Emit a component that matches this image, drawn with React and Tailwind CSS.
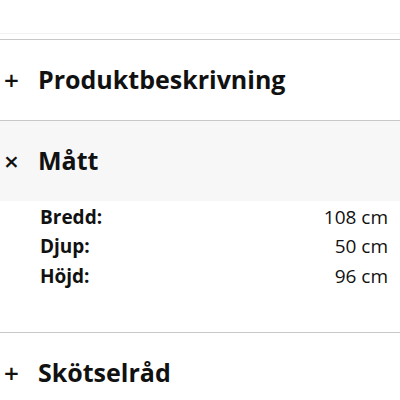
const font = { fontFamily: '"Open Sans", sans-serif' }

const dims = [
  { label: 'Bredd:', value: '108 cm' },
  { label: 'Djup:', value: '50 cm' },
  { label: 'Höjd:', value: '96 cm' },
]

function Header({ icon, title, open }) {
  return (
    <div className={`flex items-center h-[80px] ${open ? 'bg-[#f7f7f7]' : 'bg-white'}`}>
      <span className="w-[38px] pl-[4px] text-[26px] leading-none font-semibold text-[#111]">{icon}</span>
      <span className="text-[25px] font-bold text-[#111]">{title}</span>
    </div>
  )
}

export default function App() {
  return (
    <div className="w-[400px] h-[400px] overflow-hidden bg-white" style={font}>
      <div className="h-[34px] border-b border-[#f3f3f3]" />
      <div className="h-[5px]" />
      <div className="border-t border-[#c8c8c8]">
        <Header icon="+" title="Produktbeskrivning" />
      </div>
      <div className="border-t border-[#c8c8c8]">
        <Header icon="×" title="Mått" open />
        <div className="pl-[40px] pr-[12px] pt-[1px] pb-[41px]">
          {dims.map(d => (
            <div key={d.label} className="flex justify-between h-[29.5px] items-center text-[19px] text-[#111]">
              <span className="font-bold">{d.label}</span>
              <span>{d.value}</span>
            </div>
          ))}
        </div>
      </div>
      <div className="border-t border-[#c8c8c8]">
        <Header icon="+" title="Skötselråd" />
      </div>
    </div>
  )
}
